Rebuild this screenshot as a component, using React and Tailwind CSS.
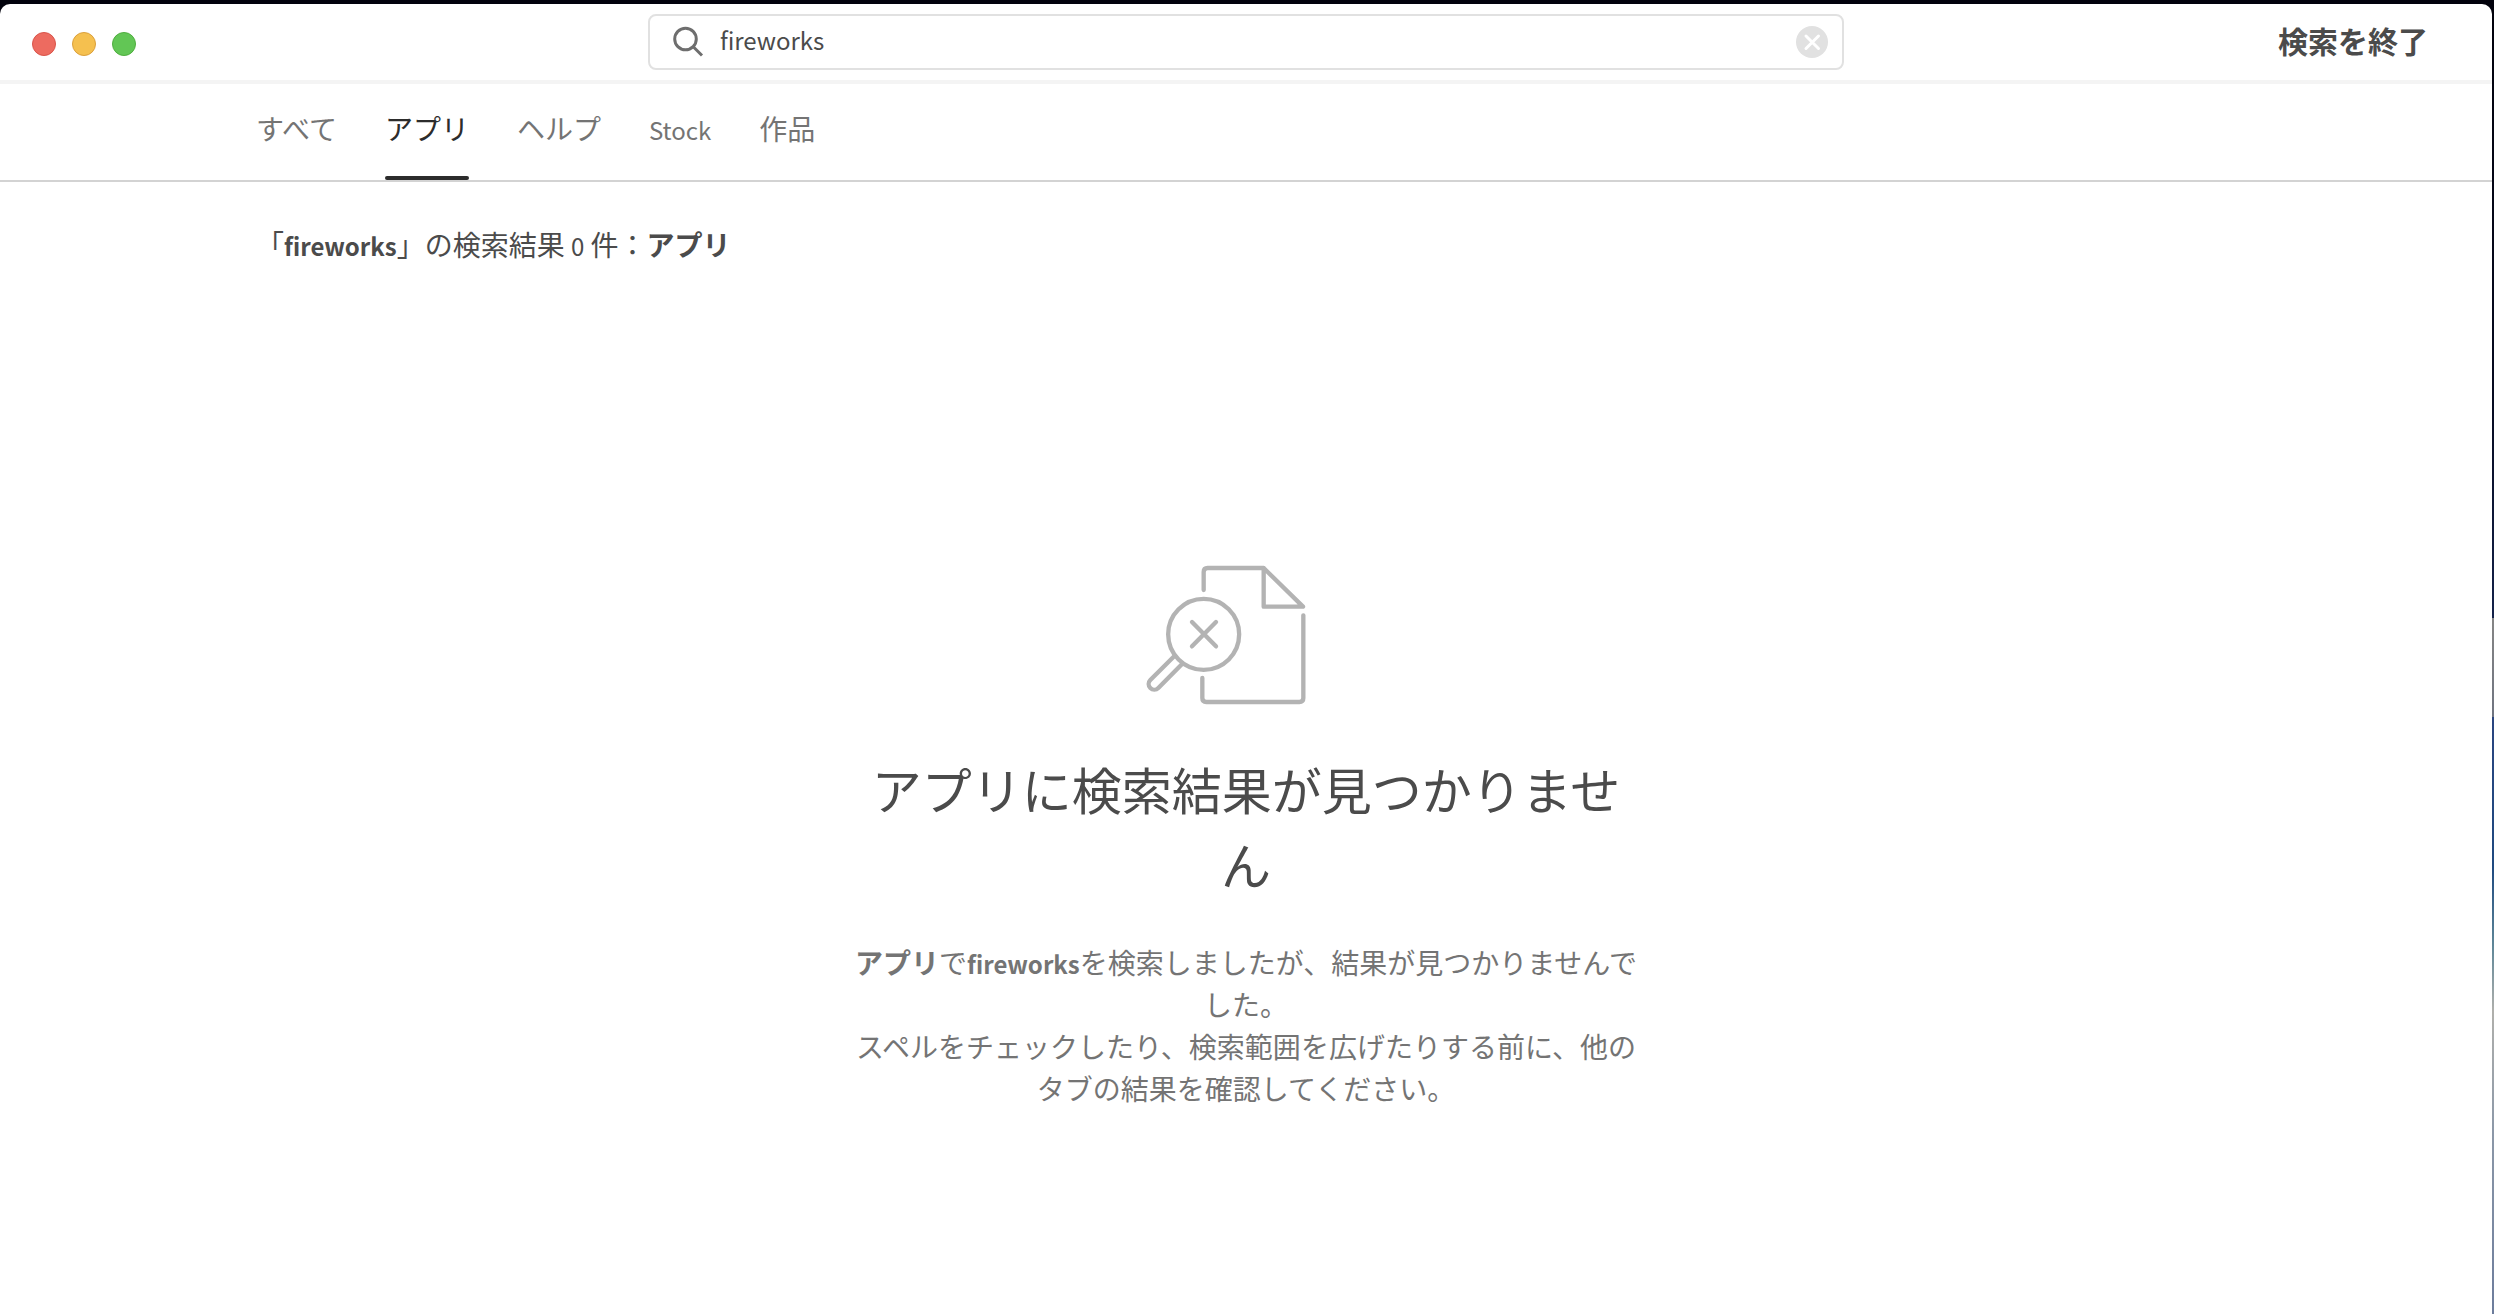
import React from "react";

const tabs = [
  { label: "すべて" },
  { label: "アプリ", active: true },
  { label: "ヘルプ" },
  { label: "Stock", latin: true },
  { label: "作品" },
];

function TrafficLights() {
  return (
    <div className="flex flex-1 items-center gap-4 pt-1">
      <button aria-label="閉じる" className="ml-8 size-6 rounded-full border border-[#d9544a] bg-[#ed6b60]" />
      <button aria-label="最小化" className="size-6 rounded-full border border-[#dba03c] bg-[#f5c04f]" />
      <button aria-label="最大化" className="size-6 rounded-full border border-[#4fae3f] bg-[#62c655]" />
    </div>
  );
}

function SearchBox() {
  return (
    <div className="flex h-14 w-[48%] items-center rounded-lg border-2 border-[#e1e1e1] bg-white pr-3.5 pl-[22px]">
      <svg className="size-8 shrink-0" viewBox="0 0 32 32" fill="none" stroke="#6e6e6e" strokeWidth="3" aria-hidden="true">
        <circle cx="13.5" cy="13" r="10.8" />
        <path d="M21 20.5 30 29.5" />
      </svg>
      <input
        aria-label="検索"
        type="text"
        defaultValue="fireworks"
        className="ml-4 min-w-0 flex-1 bg-transparent pb-1 text-[24px] leading-10 text-[#4b4b4b] outline-none"
      />
      <button aria-label="検索をクリア">
        <svg className="size-8" viewBox="0 0 32 32" aria-hidden="true">
          <circle cx="16" cy="16" r="16" fill="#e1e1e1" />
          <path d="M10 10 22.5 22.5M22.5 10 10 22.5" stroke="#fff" strokeWidth="3" strokeLinecap="round" />
        </svg>
      </button>
    </div>
  );
}

function NoResultIcon() {
  return (
    <svg
      className="h-[140px] w-[200px]"
      viewBox="138 105 600 420"
      fill="none"
      stroke="#b3b3b3"
      strokeWidth="13"
      strokeLinecap="round"
      strokeLinejoin="round"
      aria-hidden="true"
    >
      <path d="M311 180V126Q311 114 323 114H491L609 230H491V114" />
      <path d="M610 256V504Q610 516 598 516H319Q307 516 307 504V444" />
      <circle cx="311" cy="313" r="106.5" />
      <path d="M276 276 348 349M348 276 276 349" />
      <path d="M224 377 151 450A15 15 0 0 0 175 474L247 401" />
    </svg>
  );
}

export default function App() {
  return (
    <div
      lang="ja"
      className="flex min-h-screen flex-col bg-[linear-gradient(to_bottom,#02020c_0%,#060a20_30%,#14224a_47%,#858585_47%,#6f7480_54.6%,#2a4580_54.6%,#1f4a80_66%,#5f8798_72%,#b0b0ac_77%,#8c98a8_86%,#6c7c9c_100%)] pt-1 pr-0.5 font-['Noto_Sans_CJK_JP',sans-serif]"
    >
      <div className="flex flex-1 flex-col overflow-hidden rounded-t-[10px] bg-white">
        <header className="flex h-20 items-center border-b-4 border-[#f4f4f4]">
          <TrafficLights />
          <SearchBox />
          <div className="flex flex-1 justify-end pb-1">
            <button className="mr-16 text-[30px] leading-10 font-bold text-[#4b4b4b]">検索を終了</button>
          </div>
        </header>

        <nav className="flex h-[98px] gap-12 border-b-2 border-[#d3d3d3] pl-64 text-[28px]">
          {tabs.map(({ label, active, latin }) => (
            <button
              key={label}
              className={
                active
                  ? "relative pb-2 text-[#2c2c2c] after:absolute after:inset-x-0 after:bottom-0 after:h-1 after:rounded-xs after:bg-[#2c2c2c]"
                  : latin
                    ? "pb-1 text-[24px] text-[#747474]"
                    : "pb-2 text-[#747474]"
              }
            >
              {label}
            </button>
          ))}
        </nav>

        <main className="flex flex-col">
          <p className="mt-[42px] pl-64 text-[28px] leading-10 text-[#4b4b4b]">
            「<b className="text-[24px] leading-none">fireworks</b>」の検索結果{" "}
            <span className="text-[24px] leading-none">0</span> 件：<b>アプリ</b>
          </p>
          <section className="mt-[301px] flex flex-col items-center text-center">
            <NoResultIcon />
            <h1 className="mt-[46px] w-[784px] text-[50px] leading-[75px] font-normal text-[#4b4b4b]">
              アプリに検索結果が見つかりません
            </h1>
            <p className="mt-10 w-[784px] text-[28px] leading-[42px] text-[#747474]">
              <b>アプリ</b>で<b className="text-[24px] leading-none">fireworks</b>
              を検索しましたが、結果が見つかりませんでした。
              <br />
              スペルをチェックしたり、検索範囲を広げたりする前に、他のタブの結果を確認してください。
            </p>
          </section>
        </main>
      </div>
    </div>
  );
}
